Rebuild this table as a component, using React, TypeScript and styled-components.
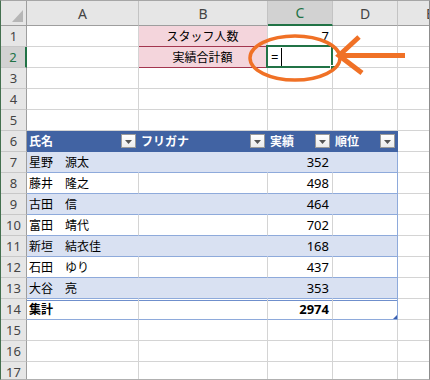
import React from "react";
import styled, { createGlobalStyle, css } from "styled-components";

const GlobalStyle = createGlobalStyle`
  html, body {
    margin: 0;
    padding: 0;
    background: #ffffff;
    overflow: hidden;
  }
  * { box-sizing: border-box; }
`;

const GRID = "#d4d4d4";
const TABLE_LINE = "#8eaadb";
const TABLE_HEAD = "#4163a3";
const BAND = "#d9e1f2";
const EXCEL_GREEN = "#217346";
const FONT = `"Noto Sans", "Noto Sans CJK JP", sans-serif`;

const Frame = styled.div`
  position: relative;
  width: 430px;
  height: 380px;
  overflow: hidden;
  border-left: 1px solid #44704f;
  border-top: 1px solid #a6a6a6;
  border-right: 1px solid #8d8d8d;
  border-bottom: 1px solid #b0b0b0;
  font-family: ${FONT};
`;

const Sheet = styled.div`
  display: grid;
  grid-template-columns: 26px 112px 129px 65px 65px 65px;
  grid-template-rows: 25px repeat(17, 21px);
`;

const Corner = styled.div`
  position: relative;
  background: #e6e6e6;
  border-right: 1px solid #9e9e9e;
  border-bottom: 1px solid #9e9e9e;
  &::after {
    content: "";
    position: absolute;
    right: 3px;
    bottom: 3px;
    width: 11px;
    height: 12px;
    background: #b6b6b6;
    clip-path: polygon(100% 0, 100% 100%, 0 100%);
  }
`;

const ColHead = styled.div<{ $active?: boolean }>`
  display: flex;
  align-items: center;
  justify-content: center;
  background: #e6e6e6;
  border-right: 1px solid #c3c3c3;
  border-bottom: 1px solid #9e9e9e;
  color: #444444;
  font-size: 14px;
  ${(p) =>
    p.$active &&
    css`
      background: #d2d2d2;
      border-bottom: 2px solid ${EXCEL_GREEN};
      color: ${EXCEL_GREEN};
    `}
`;

const RowHead = styled.div<{ $active?: boolean }>`
  display: flex;
  align-items: center;
  justify-content: center;
  background: #e6e6e6;
  border-right: 1px solid #9e9e9e;
  border-bottom: 1px solid #c8c8c8;
  color: #444444;
  font-size: 13px;
  ${(p) =>
    p.$active &&
    css`
      background: #d2d2d2;
      border-right: 2px solid ${EXCEL_GREEN};
      color: ${EXCEL_GREEN};
    `}
`;

type Tone = "plain" | "pink" | "band" | "white" | "head" | "total";

const toneStyles: Record<Tone, ReturnType<typeof css>> = {
  plain: css`
    background: #ffffff;
    border-right: 1px solid ${GRID};
    border-bottom: 1px solid ${GRID};
  `,
  pink: css`
    background: #f4d5dc;
    border-right: 1px solid ${GRID};
    border-bottom: 1px solid #a3364f;
  `,
  band: css`
    background: ${BAND};
    border-right: 1px solid ${BAND};
    border-bottom: 1px solid ${TABLE_LINE};
  `,
  white: css`
    background: #ffffff;
    border-right: 1px solid ${GRID};
    border-bottom: 1px solid ${TABLE_LINE};
  `,
  head: css`
    background: ${TABLE_HEAD};
    border-right: 1px solid ${TABLE_HEAD};
    border-bottom: 1px solid ${TABLE_HEAD};
    color: #ffffff;
    font-weight: 700;
  `,
  total: css`
    background: #ffffff;
    border-right: 1px solid ${GRID};
    border-bottom: 1px solid ${TABLE_LINE};
    box-shadow: inset 0 1px 0 #ffffff, inset 0 2px 0 #6f8fcc;
    font-weight: 700;
  `,
};

const Cell = styled.div<{
  $tone: Tone;
  $align?: "left" | "center" | "right";
  $num?: boolean;
  $edge?: boolean;
  $handle?: boolean;
}>`
  position: relative;
  display: flex;
  align-items: center;
  justify-content: ${(p) =>
    p.$align === "right" ? "flex-end" : p.$align === "center" ? "center" : "space-between"};
  padding: 0 3px 0 2px;
  color: #000000;
  font-size: ${(p) => (p.$num ? "13px" : "12px")};
  white-space: nowrap;
  ${(p) => toneStyles[p.$tone]}
  ${(p) =>
    p.$edge &&
    p.$tone !== "head" &&
    css`
      border-right-color: ${TABLE_LINE};
    `}
  ${(p) =>
    p.$handle &&
    css`
      &::after {
        content: "";
        position: absolute;
        right: 0;
        bottom: 0;
        width: 4px;
        height: 4px;
        background: #3a5fb0;
        clip-path: polygon(100% 0, 100% 100%, 0 100%);
      }
    `}
`;

const ActiveCell = styled(Cell)`
  justify-content: flex-start;
  padding-left: 3px;
  &::before {
    content: "";
    position: absolute;
    top: -2px;
    left: -2px;
    right: -1px;
    bottom: -1px;
    border: 2px solid ${EXCEL_GREEN};
    pointer-events: none;
  }
`;

const FillHandle = styled.span`
  position: absolute;
  right: -4px;
  bottom: -4px;
  width: 6px;
  height: 6px;
  background: ${EXCEL_GREEN};
  border: 1px solid #ffffff;
  z-index: 1;
`;

const Caret = styled.span`
  display: inline-block;
  width: 1px;
  height: 18px;
  margin-left: 3px;
  background: #000000;
`;

const FilterButton = styled.span`
  position: relative;
  flex: none;
  width: 15px;
  height: 14px;
  margin-right: -1px;
  border: 1px solid #9a9a9a;
  background: linear-gradient(#ffffff, #ececec);
  &::after {
    content: "";
    position: absolute;
    left: 3px;
    top: 5px;
    width: 7px;
    height: 4px;
    background: #555555;
    clip-path: polygon(0 0, 100% 0, 50% 100%);
  }
`;

const Annotation = styled.svg`
  position: absolute;
  top: -1px;
  left: -1px;
  width: 430px;
  height: 380px;
  pointer-events: none;
  z-index: 2;
`;

type Member = { name: string; score: number };

const members: Member[] = [
  { name: "星野　源太", score: 352 },
  { name: "藤井　隆之", score: 498 },
  { name: "古田　信", score: 464 },
  { name: "富田　靖代", score: 702 },
  { name: "新垣　結衣佳", score: 168 },
  { name: "石田　ゆり", score: 437 },
  { name: "大谷　亮", score: 353 },
];

const columns = ["A", "B", "C", "D", "E"];
const headings = ["氏名", "フリガナ", "実績", "順位"];

function PlainRow({ n }: { n: number }) {
  return (
    <>
      <RowHead>{n}</RowHead>
      {columns.map((c) => (
        <Cell key={c} $tone="plain" />
      ))}
    </>
  );
}

export default function App() {
  const total = members.reduce((s, m) => s + m.score, 0);
  return (
    <>
      <GlobalStyle />
      <Frame>
        <Sheet>
          <Corner />
          {columns.map((c) => (
            <ColHead key={c} $active={c === "C"}>
              {c}
            </ColHead>
          ))}

          <RowHead>1</RowHead>
          <Cell $tone="plain" />
          <Cell $tone="pink" $align="center">
            スタッフ人数
          </Cell>
          <Cell $tone="plain" $align="right" $num>
            {members.length}
          </Cell>
          <Cell $tone="plain" />
          <Cell $tone="plain" />

          <RowHead $active>2</RowHead>
          <Cell $tone="plain" />
          <Cell $tone="pink" $align="center">
            実績合計額
          </Cell>
          <ActiveCell $tone="plain" $num>
            =<Caret />
            <FillHandle />
          </ActiveCell>
          <Cell $tone="plain" />
          <Cell $tone="plain" />

          <PlainRow n={3} />
          <PlainRow n={4} />
          <PlainRow n={5} />

          <RowHead>6</RowHead>
          {headings.map((h, i) => (
            <Cell key={h} $tone="head" $edge={i === 3}>
              <span>{h}</span>
              <FilterButton />
            </Cell>
          ))}
          <Cell $tone="plain" />

          {members.map((m, i) => {
            const tone: Tone = i % 2 === 0 ? "band" : "white";
            return (
              <React.Fragment key={m.name}>
                <RowHead>{7 + i}</RowHead>
                <Cell $tone={tone}>{m.name}</Cell>
                <Cell $tone={tone} />
                <Cell $tone={tone} $align="right" $num>
                  {m.score}
                </Cell>
                <Cell $tone={tone} $edge />
                <Cell $tone="plain" />
              </React.Fragment>
            );
          })}

          <RowHead>14</RowHead>
          <Cell $tone="total">集計</Cell>
          <Cell $tone="total" />
          <Cell $tone="total" $align="right" $num>
            {total}
          </Cell>
          <Cell $tone="total" $edge $handle />
          <Cell $tone="plain" />

          <PlainRow n={15} />
          <PlainRow n={16} />
          <PlainRow n={17} />
        </Sheet>

        {/* Orange callout: ring around the input cell with a pointing arrow */}
        <Annotation viewBox="0 0 430 380">
          <ellipse
            cx="295"
            cy="58"
            rx="45"
            ry="22"
            fill="none"
            stroke="#f07126"
            strokeWidth="3.5"
          />
          <line x1="342" y1="55.5" x2="405" y2="55.5" stroke="#f07126" strokeWidth="5" />
          <polyline
            points="359,37 339,55.5 362,73"
            fill="none"
            stroke="#f07126"
            strokeWidth="5"
            strokeLinejoin="miter"
            strokeMiterlimit="10"
          />
        </Annotation>
      </Frame>
    </>
  );
}
